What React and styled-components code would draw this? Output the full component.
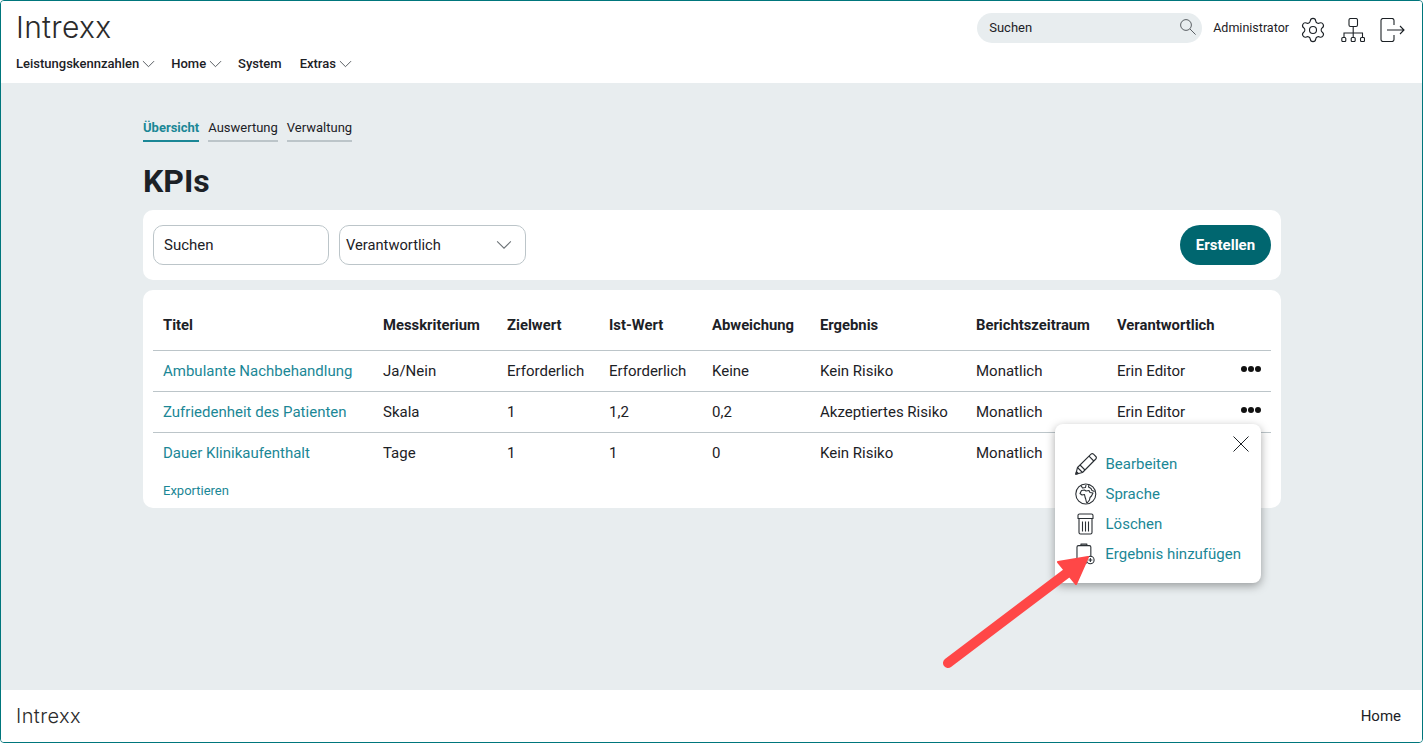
import styled, { createGlobalStyle } from "styled-components";
import { Settings } from "lucide-react";

const GlobalStyle = createGlobalStyle`
  * {
    box-sizing: border-box;
  }
  body {
    margin: 0;
    font-family: Roboto, "Liberation Sans", sans-serif;
    color: #1c2126;
  }
`;

const columns = [
  { title: "Titel", width: 220 },
  { title: "Messkriterium", width: 124 },
  { title: "Zielwert", width: 102 },
  { title: "Ist-Wert", width: 103 },
  { title: "Abweichung", width: 108 },
  { title: "Ergebnis", width: 156 },
  { title: "Berichtszeitraum", width: 141 },
  { title: "Verantwortlich", width: 118 },
  { title: "", width: 46 },
];

const rows = [
  ["Ambulante Nachbehandlung", "Ja/Nein", "Erforderlich", "Erforderlich", "Keine", "Kein Risiko", "Monatlich", "Erin Editor", true],
  ["Zufriedenheit des Patienten", "Skala", "1", "1,2", "0,2", "Akzeptiertes Risiko", "Monatlich", "Erin Editor", true],
  ["Dauer Klinikaufenthalt", "Tage", "1", "1", "0", "Kein Risiko", "Monatlich", "", false],
];

const Chevron = ({ size = 13, color = "#3a3f44" }) => (
  <svg width={size} height={size * 0.6} viewBox="0 0 14 8" fill="none" stroke={color} strokeWidth="0.9">
    <path d="M1 1l6 6 6-6" />
  </svg>
);

function App() {
  return (
    <Frame>
      <GlobalStyle />
      <Header>
        <TopRow>
          <Logo>Intrexx</Logo>
          <HeaderTools>
            <HeaderSearch>
              <span>Suchen</span>
              <svg width="16" height="16" viewBox="0 0 16 16" fill="none" stroke="#4a4f54" strokeWidth="0.9">
                <circle cx="6" cy="6" r="5.4" />
                <path d="M10 10l5.600 5.600" />
              </svg>
            </HeaderSearch>
            <UserName>Administrator</UserName>
            <ToolIcon>
              <GearIcon size={28} strokeWidth={0.95} color="#1c2126" />
            </ToolIcon>
            <ToolIcon>
              <svg width="24" height="24" viewBox="0 0 24 24" fill="none" stroke="#1c2126" strokeWidth="1.100">
                <rect x="8" y="0.500" width="8.500" height="8" rx="1.500" />
                <path d="M12.200 8.500v11M3 19.500V15h18.500v4.500" />
                <rect x="0.800" y="19.500" width="4" height="4" rx="1" />
                <rect x="10.200" y="19.500" width="4" height="4" rx="1" />
                <rect x="19.500" y="19.500" width="4" height="4" rx="1" />
              </svg>
            </ToolIcon>
            <ToolIcon>
              <svg width="25" height="24" viewBox="0 0 25 24" fill="none" stroke="#1c2126" strokeWidth="1.100">
                <path d="M14 7V2.500a2 2 0 0 0-2-2H3a2 2 0 0 0-2 2v19a2 2 0 0 0 2 2h9a2 2 0 0 0 2-2V17" />
                <path d="M7 12h17M20 8l4 4-4 4" />
              </svg>
            </ToolIcon>
          </HeaderTools>
        </TopRow>
        <Nav>
          <NavItem>Leistungskennzahlen<Chevron /></NavItem>
          <NavItem>Home<Chevron /></NavItem>
          <NavItem $plain>System</NavItem>
          <NavItem>Extras<Chevron /></NavItem>
        </Nav>
      </Header>

      <Main>
        <Tabs>
          <Tab $active>Übersicht</Tab>
          <Tab>Auswertung</Tab>
          <Tab>Verwaltung</Tab>
        </Tabs>
        <Title>KPIs</Title>
        <FilterCard>
          <SearchField>Suchen</SearchField>
          <SelectField>
            Verantwortlich
            <Chevron size={16} color="#6b7175" />
          </SelectField>
          <CreateButton>Erstellen</CreateButton>
        </FilterCard>
        <TableCard>
          <Table>
            <colgroup>
              {columns.map((c, i) => (
                <col key={i} style={{ width: c.width }} />
              ))}
            </colgroup>
            <thead>
              <tr>
                {columns.map((c, i) => (
                  <Th key={i}>{c.title}</Th>
                ))}
              </tr>
            </thead>
            <tbody>
              {rows.map((row) => (
                <Row key={row[0]}>
                  <Td><RowLink>{row[0]}</RowLink></Td>
                  {row.slice(1, 8).map((v, i) => (
                    <Td key={i}>{v}</Td>
                  ))}
                  <Td>{row[8] ? <Dots><i /><i /><i /></Dots> : null}</Td>
                </Row>
              ))}
            </tbody>
          </Table>
          <ExportLink>Exportieren</ExportLink>

          <Popup>
            <CloseButton>
              <svg width="16" height="16" viewBox="0 0 16 16" fill="none" stroke="#1c2126" strokeWidth="1">
                <path d="M0.500 0.500l15 15M15.500 0.500l-15 15" />
              </svg>
            </CloseButton>
            <MenuItem>
              <svg width="22" height="22" viewBox="0 0 22 22" fill="none" stroke="#2a2f34" strokeWidth="1.100" strokeLinejoin="round">
                <path d="M0.800 21.200l1.700-6.700L16 1.200a1.800 1.800 0 0 1 2.500 0l2.300 2.300a1.800 1.800 0 0 1 0 2.500L7.500 19.500z" />
                <path d="M14 3.200l4.800 4.800M2.500 14.500l5 5M5 12l5 5M0.800 21.200l2.500-.7-1.800-1.800z" />
              </svg>
              Bearbeiten
            </MenuItem>
            <MenuItem>
              <svg width="22" height="22" viewBox="0 0 22 22" fill="none" stroke="#2a2f34" strokeWidth="1.100" strokeLinejoin="round">
                <circle cx="10.800" cy="11" r="10" />
                <path d="M5 10.500l1.500-3 3-.5 1.500 1 3-.5 1 2 3 .5-1.500 3-1.500 1.500-.5 2.500-2 2.500h-1l-.8-3.500-.7-2-.5-2.500-2.500.5z" />
                <path d="M6 2.500l1.500 2.500 3-.5.5-2.500M14 1.500l-.5 2.500 2.500 1.500 1 2 2.500 1" />
              </svg>
              Sprache
            </MenuItem>
            <MenuItem>
              <svg width="22" height="22" viewBox="0 0 22 22" fill="none" stroke="#2a2f34" strokeWidth="1.100" strokeLinejoin="round">
                <path d="M3 5.500V2.500A1.500 1.500 0 0 1 4.500 1h12A1.500 1.500 0 0 1 18 2.500v3z" />
                <path d="M4 5.500V19.500A1.500 1.500 0 0 0 5.500 21h10a1.500 1.500 0 0 0 1.500-1.500V5.500" />
                <path d="M7.500 8.500v10M10.500 8.500v10M13.500 8.500v10" />
              </svg>
              Löschen
            </MenuItem>
            <MenuItem>
              <svg width="22" height="22" viewBox="0 0 22 22" fill="none" stroke="#2a2f34" strokeWidth="1.100" strokeLinejoin="round">
                <path d="M12 20H3.500A1.500 1.500 0 0 1 2 18.500V4a1.500 1.500 0 0 1 1.500-1.500h11A1.500 1.500 0 0 1 16 4v9.500" />
                <path d="M6 2.500V1h6v1.500" />
                <circle cx="15.500" cy="17" r="3.800" />
                <path d="M13.500 17h4M15.500 15v4" />
              </svg>
              Ergebnis hinzufügen
            </MenuItem>
          </Popup>
        </TableCard>

        <Arrow width="160" height="124" viewBox="0 0 160 124">
          <path d="M5 112L124 22" stroke="#ff4747" strokeWidth="10" strokeLinecap="round" />
          <path d="M145 6L115 11L133 33z" fill="#ff4747" stroke="#ff4747" strokeWidth="2" strokeLinejoin="round" />
        </Arrow>
      </Main>

      <Footer>
        <FooterLogo>Intrexx</FooterLogo>
        <FooterLink>Home</FooterLink>
      </Footer>
    </Frame>
  );
}

export default App;

const Frame = styled.div`
  display: flex;
  flex-direction: column;
  height: 100vh;
  border: 1px solid #00767c;
  border-radius: 4px;
  overflow: hidden;
  background-color: #e8edef;
`;

const Header = styled.header`
  height: 82px;
  padding: 12px 15px 0;
  background-color: #fff;
`;

const TopRow = styled.div`
  display: flex;
  justify-content: space-between;
  align-items: flex-start;
  height: 37px;
`;

const Logo = styled.span`
  margin-top: -1px;
  font-family: Inter, Lato, sans-serif;
  font-weight: 300;
  font-size: 30px;
  line-height: 30px;
  letter-spacing: 0.3px;
  color: #2b2b2b;
`;

const HeaderTools = styled.div`
  display: flex;
  align-items: center;
  margin-right: 2px;
`;

const HeaderSearch = styled.div`
  display: flex;
  align-items: center;
  justify-content: space-between;
  width: 225px;
  height: 30px;
  padding: 0 6px 2px 12px;
  border-radius: 15px;
  background-color: #e8edef;
  font-size: 13px;
`;

const UserName = styled.span`
  margin: -2px 0 0 11px;
  font-size: 12.5px;
`;

const ToolIcon = styled.span`
  display: flex;
  margin: 3px 0 0 11px;
  & + & {
    margin-left: 15px;
  }
`;

const GearIcon = styled(Settings)`
  margin: -1px;
`;

const Nav = styled.nav`
  display: flex;
  gap: 16px;
  margin-top: 4px;
`;

const NavItem = styled.span`
  display: flex;
  align-items: center;
  gap: 3px;
  margin-right: ${(p) => (p.$plain ? "2px" : "0")};
  font-size: 13px;
  font-weight: 500;
  line-height: 20px;
`;

const Main = styled.main`
  position: relative;
  flex: 1;
  padding: 36px 141px 0 142px;
`;

const Tabs = styled.div`
  display: flex;
  gap: 9px;
`;

const Tab = styled.span`
  padding-bottom: 4px;
  border-bottom: 2px solid ${(p) => (p.$active ? "#1b8796" : "#bcc5c9")};
  font-size: 13px;
  font-weight: ${(p) => (p.$active ? 700 : 400)};
  line-height: 17px;
  color: ${(p) => (p.$active ? "#1b8796" : "#1c2126")};
`;

const Title = styled.h1`
  margin: 20px 0 10px;
  font-size: 32px;
  font-weight: 700;
  line-height: 38px;
  color: #1c2126;
`;

const FilterCard = styled.div`
  display: flex;
  align-items: center;
  gap: 10px;
  height: 70px;
  padding: 0 10px;
  border-radius: 10px;
  background-color: #fff;
`;

const SearchField = styled.div`
  display: flex;
  align-items: center;
  width: 176px;
  height: 40px;
  padding: 0 10px;
  border: 1px solid #bcc5c9;
  border-radius: 10px;
  font-size: 15px;
`;

const SelectField = styled(SearchField)`
  justify-content: space-between;
  width: 187px;
  padding: 0 13px 0 6px;
  font-size: 14.7px;
`;

const CreateButton = styled.button`
  width: 91px;
  height: 40px;
  margin-left: auto;
  border: none;
  border-radius: 20px;
  background-color: #00666f;
  color: #fff;
  font-family: inherit;
  font-size: 15px;
  font-weight: 700;
`;

const TableCard = styled.div`
  position: relative;
  height: 218px;
  margin-top: 10px;
  padding: 0 10px;
  border-radius: 10px;
  background-color: #fff;
`;

const Table = styled.table`
  width: 1118px;
  table-layout: fixed;
  border-collapse: collapse;
  font-size: 15px;
`;

const Th = styled.th`
  height: 60px;
  padding: 10px 10px 0;
  border-bottom: 1px solid #bcc5c9;
  text-align: left;
  font-size: 14.8px;
  font-weight: 700;
  white-space: nowrap;
`;

const Row = styled.tr`
  &:not(:last-child) td {
    border-bottom: 1px solid #bcc5c9;
  }
`;

const Td = styled.td`
  height: 41px;
  padding: 1px 10px 0;
  white-space: nowrap;
`;

const RowLink = styled.a`
  color: #1b8796;
`;

const Dots = styled.span`
  display: flex;
  gap: 1px;
  margin: -4px 0 0 6px;
  i {
    width: 6px;
    height: 6px;
    border-radius: 50%;
    background-color: #111;
  }
`;

const ExportLink = styled.a`
  display: block;
  margin: 10px 0 0 10px;
  font-size: 13px;
  color: #1b8796;
`;

const Popup = styled.div`
  position: absolute;
  top: 134px;
  right: 20px;
  width: 206px;
  height: 159px;
  padding: 25px 20px 0;
  border-radius: 8px;
  background-color: #fff;
  box-shadow: 0 3px 10px rgba(0, 0, 0, 0.35);
`;

const CloseButton = styled.span`
  position: absolute;
  top: 12px;
  right: 12px;
  display: flex;
`;

const MenuItem = styled.div`
  display: flex;
  align-items: center;
  gap: 8.5px;
  height: 30px;
  font-size: 15px;
  color: #1b8796;
  white-space: nowrap;
`;

const Arrow = styled.svg`
  position: absolute;
  top: 468px;
  left: 942px;
`;

const Footer = styled.footer`
  display: flex;
  align-items: center;
  justify-content: space-between;
  height: 52px;
  padding: 0 21px 0 15px;
  background-color: #fff;
`;

const FooterLogo = styled(Logo)`
  margin-top: 0;
  font-size: 20px;
  line-height: 24px;
  letter-spacing: 0.4px;
`;

const FooterLink = styled.span`
  font-size: 15px;
`;
